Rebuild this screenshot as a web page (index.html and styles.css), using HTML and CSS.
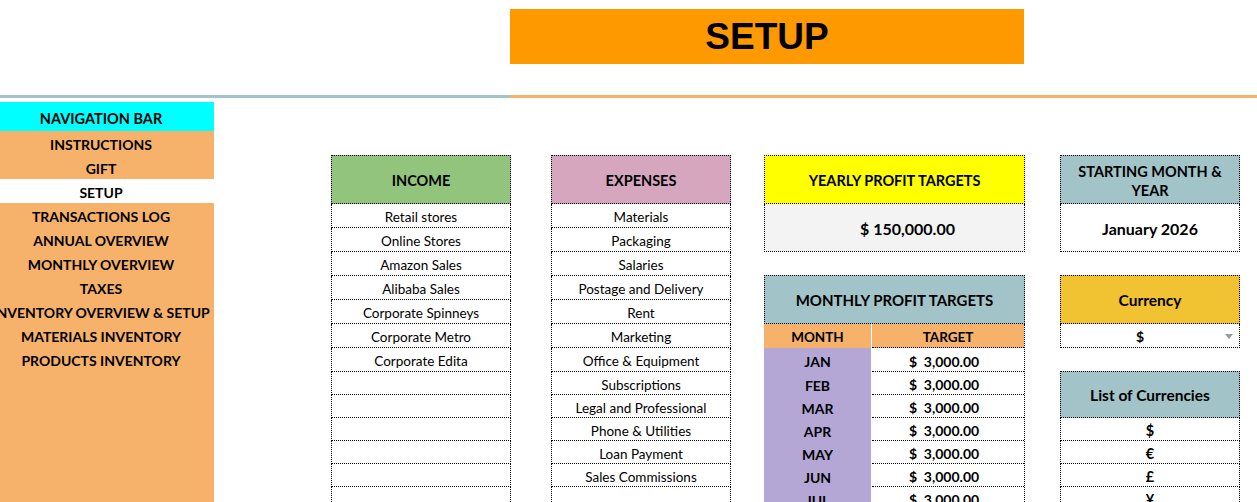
FILE: index.html
```html
<!DOCTYPE html>
<html lang="en">
<head>
<meta charset="utf-8">
<title>Setup</title>
<link rel="stylesheet" href="styles.css">
</head>
<body>
<div class="page">
  <header class="top">
    <div class="title">SETUP</div>
  </header>
  <div class="rule"><div class="rule-left"></div><div class="rule-right"></div></div>
  <div class="main">
    <nav class="nav">
      <div class="nav-head">NAVIGATION BAR</div>
      <div class="nav-item">INSTRUCTIONS</div>
      <div class="nav-item">GIFT</div>
      <div class="nav-item current">SETUP</div>
      <div class="nav-item">TRANSACTIONS LOG</div>
      <div class="nav-item">ANNUAL OVERVIEW</div>
      <div class="nav-item">MONTHLY OVERVIEW</div>
      <div class="nav-item">TAXES</div>
      <div class="nav-item">INVENTORY OVERVIEW &amp; SETUP</div>
      <div class="nav-item">MATERIALS INVENTORY</div>
      <div class="nav-item">PRODUCTS INVENTORY</div>
    </nav>
    <div class="content">
      <div class="col col-income">
        <div class="head green">INCOME</div>
        <div class="row">Retail stores</div>
        <div class="row">Online Stores</div>
        <div class="row">Amazon Sales</div>
        <div class="row">Alibaba Sales</div>
        <div class="row">Corporate Spinneys</div>
        <div class="row">Corporate Metro</div>
        <div class="row">Corporate Edita</div>
        <div class="row short"></div>
        <div class="row short"></div>
        <div class="row short"></div>
        <div class="row short"></div>
        <div class="row short"></div>
        <div class="row short"></div>
      </div>
      <div class="col col-expenses">
        <div class="head pink">EXPENSES</div>
        <div class="row">Materials</div>
        <div class="row">Packaging</div>
        <div class="row">Salaries</div>
        <div class="row">Postage and Delivery</div>
        <div class="row">Rent</div>
        <div class="row">Marketing</div>
        <div class="row">Office &amp; Equipment</div>
        <div class="row short">Subscriptions</div>
        <div class="row short">Legal and Professional</div>
        <div class="row short">Phone &amp; Utilities</div>
        <div class="row short">Loan Payment</div>
        <div class="row short">Sales Commissions</div>
        <div class="row short"></div>
      </div>
      <div class="col col-mid">
        <div class="head yellow">YEARLY PROFIT TARGETS</div>
        <div class="value grey yearly">$ 150,000.00</div>
        <div class="head teal big spaced">MONTHLY PROFIT TARGETS</div>
        <div class="mgrid">
          <div class="mhead mcol">MONTH</div>
          <div class="mhead tcol">TARGET</div>
          <div class="mcell mcol">JAN</div><div class="tcell">$&nbsp; 3,000.00</div>
          <div class="mcell mcol short">FEB</div><div class="tcell short">$&nbsp; 3,000.00</div>
          <div class="mcell mcol short">MAR</div><div class="tcell short">$&nbsp; 3,000.00</div>
          <div class="mcell mcol short">APR</div><div class="tcell short">$&nbsp; 3,000.00</div>
          <div class="mcell mcol short">MAY</div><div class="tcell short">$&nbsp; 3,000.00</div>
          <div class="mcell mcol short">JUN</div><div class="tcell short">$&nbsp; 3,000.00</div>
          <div class="mcell mcol short">JUL</div><div class="tcell short">$&nbsp; 3,000.00</div>
        </div>
      </div>
      <div class="col col-right">
        <div class="head teal two">STARTING MONTH &amp;<br>YEAR</div>
        <div class="value">January 2026</div>
        <div class="head gold spaced cur">Currency</div>
        <div class="dropdown">
          <span class="dd-text">$</span>
          <svg class="dd-arrow" width="8" height="5" viewBox="0 0 8 5"><path d="M0 0H8L4 5Z" fill="#9a9a9a"/></svg>
        </div>
        <div class="head teal list-head">List of Currencies</div>
        <div class="row short bold">$</div>
        <div class="row short bold">€</div>
        <div class="row short bold">£</div>
        <div class="row short bold">¥</div>
      </div>
    </div>
  </div>
</div>
</body>
</html>
```

FILE: styles.css
```css
* { box-sizing: border-box; }
html, body { margin: 0; padding: 0; background: #fff; }
body {
  font-family: "Lato", "Open Sans", sans-serif;
  color: #000;
  width: 1257px;
  height: 502px;
  overflow: hidden;
}
.page { width: 1257px; }

.top {
  height: 95px;
  padding-top: 9px;
  padding-left: 510px;
}
.title {
  width: 514px;
  height: 55px;
  background: #ff9900;
  font-family: "Liberation Sans", Arial, sans-serif;
  font-weight: bold;
  font-size: 37px;
  display: flex;
  align-items: center;
  justify-content: center;
  padding-top: 1px;
}

.rule { display: flex; height: 3px; }
.rule-left { width: 510px; background: #a2c4c9; }
.rule-right { flex: 1; background: #f6b26b; }

.main { display: flex; margin-top: 4px; }

.nav {
  width: 214px;
  height: 420px;
  background: #f6b26b;
  font-weight: bold;
  font-size: 14px;
  flex-shrink: 0;
  overflow: hidden;
}
.nav-head {
  height: 29px;
  background: #00ffff;
  display: flex;
  align-items: center;
  justify-content: center;
  padding-top: 3px;
  padding-right: 12px;
  font-size: 14.5px;
}
.nav-item {
  height: 24px;
  display: flex;
  align-items: center;
  justify-content: center;
  white-space: nowrap;
  padding-top: 2px;
  padding-right: 12px;
}
.nav-item.current { background: #fff; }

.content {
  display: flex;
  align-items: flex-start;
  padding-top: 53px;
  padding-left: 117px;
}
.col { display: flex; flex-direction: column; width: 180px; }
.col-expenses { margin-left: 40px; }
.col-mid { margin-left: 33px; width: 261px; }
.col-right { margin-left: 35px; width: 180px; }

.head {
  height: 49px;
  border: 1px dotted #000;
  display: flex;
  align-items: center;
  justify-content: center;
  text-align: center;
  font-weight: bold;
  font-size: 14.5px;
  padding-top: 2px;
  line-height: 19px;
}
.head.big { font-size: 15px; }
.head.cur { font-size: 15.5px; }
.head.spaced { margin-top: 23px; }
.green { background: #93c47d; }
.pink { background: #d5a6bd; }
.yellow { background: #ffff00; }
.teal { background: #a2c4c9; }
.gold { background: #f1c232; }
.grey { background: #f3f3f3; }

.row {
  height: 24px;
  border: 1px dotted #000;
  border-top: none;
  display: flex;
  align-items: center;
  justify-content: center;
  font-size: 13.5px;
  padding-top: 3px;
  white-space: nowrap;
}
.row.short { height: 23px; }
.row.bold { font-weight: bold; font-size: 14.5px; }

.value {
  height: 48px;
  border: 1px dotted #000;
  border-top: none;
  display: flex;
  align-items: center;
  justify-content: center;
  font-weight: bold;
  font-size: 16px;
  padding-top: 2px;
}
.value.yearly { padding-left: 26px; }

.mgrid {
  display: grid;
  grid-template-columns: 107px 1fr;
  column-gap: 1px;
  background: #fff;
  border-right: 1px dotted #000;
}
.mhead {
  height: 24px;
  background: #f6b26b;
  display: flex;
  align-items: center;
  justify-content: center;
  font-weight: bold;
  font-size: 13.5px;
  padding-top: 3px;
  border-bottom: 1px dotted #000;
}
.mhead.mcol { border-bottom-color: #f6b26b; }
.mcell {
  height: 24px;
  background: #b4a7d6;
  display: flex;
  align-items: center;
  justify-content: center;
  font-weight: bold;
  font-size: 14px;
  padding-top: 3px;
}
.tcell {
  height: 24px;
  border-bottom: 1px dotted #000;
  display: flex;
  align-items: center;
  justify-content: center;
  font-weight: bold;
  font-size: 14px;
  padding-top: 3px;
  padding-right: 8px;
}
.mcell.short, .tcell.short { height: 23px; }

.dropdown {
  height: 24px;
  border: 1px dotted #000;
  border-top: none;
  display: grid;
  grid-template-columns: 1fr 20px;
  align-items: center;
  font-weight: bold;
  font-size: 14px;
  padding-top: 1px;
}
.dd-text { text-align: center; }
.dd-arrow { justify-self: center; }
.list-head { margin-top: 23px; height: 47px; font-size: 15.5px; }
```
